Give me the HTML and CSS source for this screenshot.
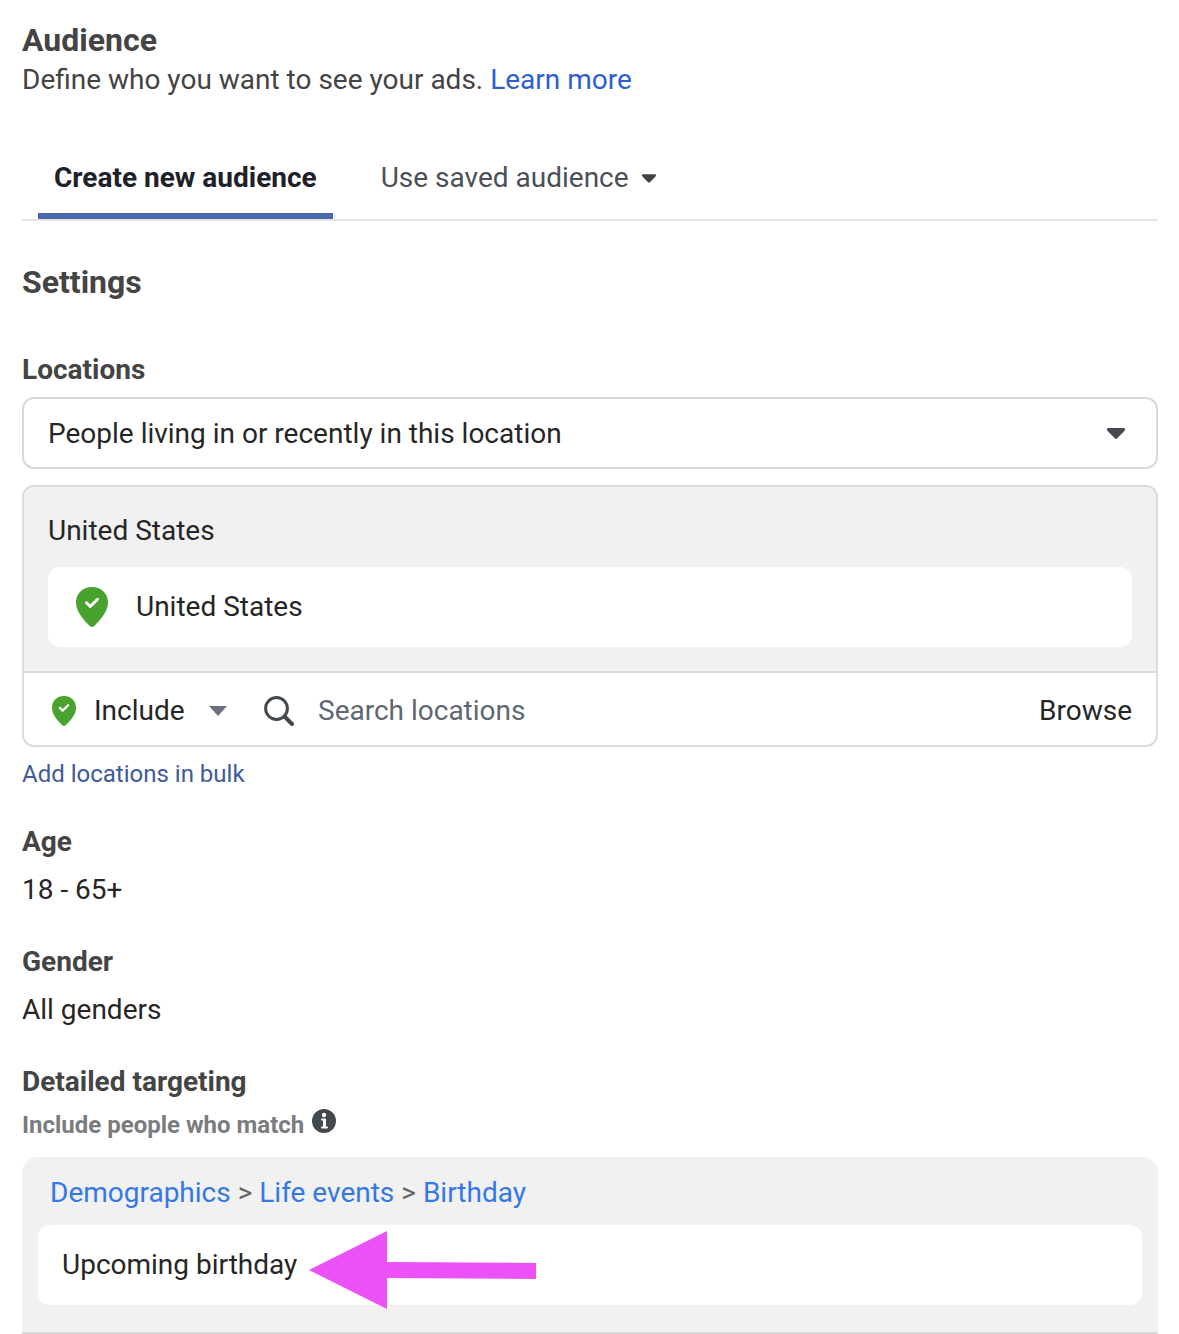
FILE: index.html
```html
<!DOCTYPE html>
<html lang="en">
<head>
    <meta charset="UTF-8">
    <meta name="viewport" content="width=device-width, initial-scale=1.0">
    <title>Audience</title>
    <link rel="stylesheet" href="styles.css">
</head>
<body>
<svg class="sprite" aria-hidden="true">
    <symbol id="pin" viewBox="0 0 32 40">
        <path fill="#49a22e" d="M16 0C6.5 0 0 6.5 0 15.500C0 25 8 33 13.800 39C15.200 40.300 16.800 40.300 18.200 39C24 33 32 25 32 15.500C32 6.500 25.500 0 16 0Z"/>
        <path fill="none" stroke="#fff" stroke-width="3" stroke-linecap="round" stroke-linejoin="round" d="M10.500 15.800L14.200 19.500L21.500 12.300"/>
    </symbol>
    <symbol id="caret" viewBox="0 0 18 11">
        <path d="M1.500 0H16.500C18 0 18.500 1.800 17.400 2.900L10.200 10.300C9.500 11.100 8.500 11.100 7.800 10.300L.6 2.900C-.5 1.800 0 0 1.500 0Z"/>
    </symbol>
</svg>
<div class="container">
    <header>
        <h1>Audience</h1>
        <p class="description">Define who you want to see your ads. <a href="#">Learn more</a></p>
    </header>

    <nav class="tabs">
        <button type="button" class="tab active">Create new audience</button>
        <button type="button" class="tab">Use saved audience
            <svg class="tab-caret"><use href="#caret"/></svg>
        </button>
    </nav>

    <h2>Settings</h2>

    <section>
        <label class="title" for="locationType">Locations</label>
        <div class="select-box">
            <select id="locationType">
                <option>People living in or recently in this location</option>
            </select>
            <svg class="select-caret"><use href="#caret"/></svg>
        </div>
        <div class="locations">
            <div class="locations-list">
                <div>United States</div>
                <div class="location">
                    <svg class="pin-large"><use href="#pin"/></svg>
                    <span>United States</span>
                </div>
            </div>
            <div class="locations-search">
                <svg class="pin-small"><use href="#pin"/></svg>
                <div class="include">
                    <select id="includeMode" aria-label="Include or exclude">
                        <option>Include</option>
                    </select>
                    <svg class="include-caret" viewBox="0 0 18 10"><path d="M0 0H18L9 10Z"/></svg>
                </div>
                <svg class="search-icon" viewBox="0 0 30 30">
                    <circle cx="12.500" cy="12.500" r="10.900"/>
                    <path d="M20.500 20.500L28 28"/>
                </svg>
                <input type="text" id="searchInput" aria-label="Search locations" placeholder="Search locations">
                <button type="button" class="browse">Browse</button>
            </div>
        </div>
        <a class="bulk" href="#">Add locations in bulk</a>
    </section>

    <section class="field">
        <h3 class="title">Age</h3>
        <p>18 - 65+</p>
    </section>

    <section class="field">
        <h3 class="title">Gender</h3>
        <p>All genders</p>
    </section>

    <section class="field">
        <h3 class="title">Detailed targeting</h3>
        <div class="match">
            <span>Include people who match</span>
            <svg class="info-icon" viewBox="0 0 24 24">
                <circle cx="12" cy="12" r="12" fill="#444950"/>
                <circle cx="12" cy="6" r="2.200" fill="#fff"/>
                <path fill="#fff" d="M10 9.500H13.200Q14 9.500 14 10.300V17.500H15Q16 17.500 16 18.500T15 19.500H10Q9 19.500 9 18.500T10 17.500H11V11.500H10Q9 11.500 9 10.500T10 9.500Z"/>
            </svg>
        </div>
        <div class="targeting">
            <div class="breadcrumbs">
                <a href="#">Demographics</a> &gt; <a href="#">Life events</a> &gt; <a href="#">Birthday</a>
            </div>
            <div class="interest">
                <span class="interest-name">Upcoming birthday
                    <svg class="arrow" viewBox="0 0 228 78"><path d="M0 39L78 0V31L227 32V48L78 47V78Z"/></svg>
                </span>
            </div>
        </div>
    </section>
</div>
</body>
</html>
```

FILE: styles.css
```css
* {
    box-sizing: border-box;
}
body {
    margin: 0;
    background-color: #fff;
    color: #262626;
    font-family: Roboto, Arial, sans-serif;
    font-size: 28px;
    line-height: 40px;
}
h1, h2, h3, p {
    margin: 0;
}
h1, h2 {
    color: #444;
    font-size: 32px;
}
h2 {
    margin: 41px 0 48px;
}
a {
    color: #2d5fd0;
    text-decoration: none;
}
button, input, select {
    padding: 0;
    border: none;
    background: none;
    color: inherit;
    font: inherit;
    outline: none;
}
button, select {
    cursor: pointer;
}
select {
    appearance: none;
}
svg {
    display: block;
    flex-shrink: 0;
}
.sprite {
    position: absolute;
    width: 0;
    height: 0;
}
.container {
    padding: 20px 21px 0 22px;
}
.description {
    color: #444;
}
.tabs {
    display: flex;
    gap: 32px;
    margin-top: 58px;
    padding-left: 16px;
    border-bottom: 2px solid #e5e5e5;
}
.tab {
    display: flex;
    align-items: center;
    gap: 13px;
    padding: 0 16px 15px;
    border-bottom: 6px solid transparent;
    color: #4b4f56;
}
.tab.active {
    border-color: #4967ad;
    color: #1d2129;
    font-weight: bold;
}
.tab-caret {
    width: 14px;
    height: 9px;
    fill: #444;
}
.tab-caret, .select-caret {
    overflow: visible;
}
.title {
    display: block;
    color: #444;
    font-size: 28px;
    font-weight: bold;
}
.select-box {
    display: grid;
    align-items: center;
    margin: 7px 0 16px;
    border: 2px solid #d9d9d9;
    border-radius: 12px;
}
.select-box select, .select-caret {
    grid-area: 1 / 1;
}
.select-box select {
    width: 100%;
    height: 68px;
    padding: 2px 64px 0 24px;
}
.select-caret {
    width: 18px;
    height: 11px;
    margin-right: 31px;
    justify-self: end;
    fill: #444950;
    pointer-events: none;
}
.locations {
    border: 2px solid #dadbe0;
    border-radius: 12px;
    overflow: hidden;
}
.locations-list {
    padding: 24px;
    border-bottom: 2px solid #dadbe0;
    background-color: #f1f1f1;
}
.location {
    display: flex;
    align-items: center;
    gap: 28px;
    height: 80px;
    margin-top: 16px;
    padding: 0 28px;
    border-radius: 12px;
    background-color: #fff;
}
.pin-large {
    width: 32px;
    height: 40px;
}
.pin-small {
    width: 24px;
    height: 30px;
}
.locations-search {
    display: flex;
    align-items: center;
    height: 72px;
    padding: 4px 24px 0 28px;
}
.include {
    display: grid;
    align-items: center;
    margin: 0 37px 0 18px;
}
.include select, .include-caret {
    grid-area: 1 / 1;
}
.include select {
    height: 40px;
    padding-right: 42px;
}
.include-caret {
    width: 18px;
    height: 10px;
    justify-self: end;
    fill: #6a7180;
    pointer-events: none;
}
.search-icon {
    width: 30px;
    height: 30px;
    fill: none;
    stroke: #444950;
    stroke-width: 3;
    stroke-linecap: round;
}
.search-icon path {
    stroke-width: 4;
}
.locations-search input {
    flex: 1;
    min-width: 0;
    height: 40px;
    margin: 0 24px;
}
.locations-search input::placeholder {
    color: #606770;
    opacity: 1;
}
.bulk {
    display: block;
    margin-top: 11px;
    color: #405a9b;
    font-size: 24px;
    line-height: 32px;
}
.field {
    margin-top: 32px;
}
.field p {
    margin-top: 8px;
}
.match {
    display: flex;
    gap: 8px;
    margin-top: 7px;
    color: #7a7c80;
    font-size: 24px;
    font-weight: bold;
    line-height: 32px;
}
.info-icon {
    width: 24px;
    height: 24px;
}
.targeting {
    margin-top: 16px;
    padding: 16px 16px 27px;
    border-bottom: 2px solid #d9d9d9;
    border-radius: 16px 16px 0 0;
    background-color: #f1f1f1;
}
.breadcrumbs {
    padding: 0 12px;
    color: #666;
}
.breadcrumbs a {
    color: #3578e5;
}
.interest {
    display: flex;
    align-items: center;
    height: 80px;
    margin-top: 12px;
    padding: 0 24px;
    border-radius: 12px;
    background-color: #fff;
}
.interest-name {
    position: relative;
}
/* callout arrow drawn over the row */
.arrow {
    position: absolute;
    top: -14px;
    left: 100%;
    width: 228px;
    height: 78px;
    margin-left: 12px;
    fill: #ec50f7;
}
```
